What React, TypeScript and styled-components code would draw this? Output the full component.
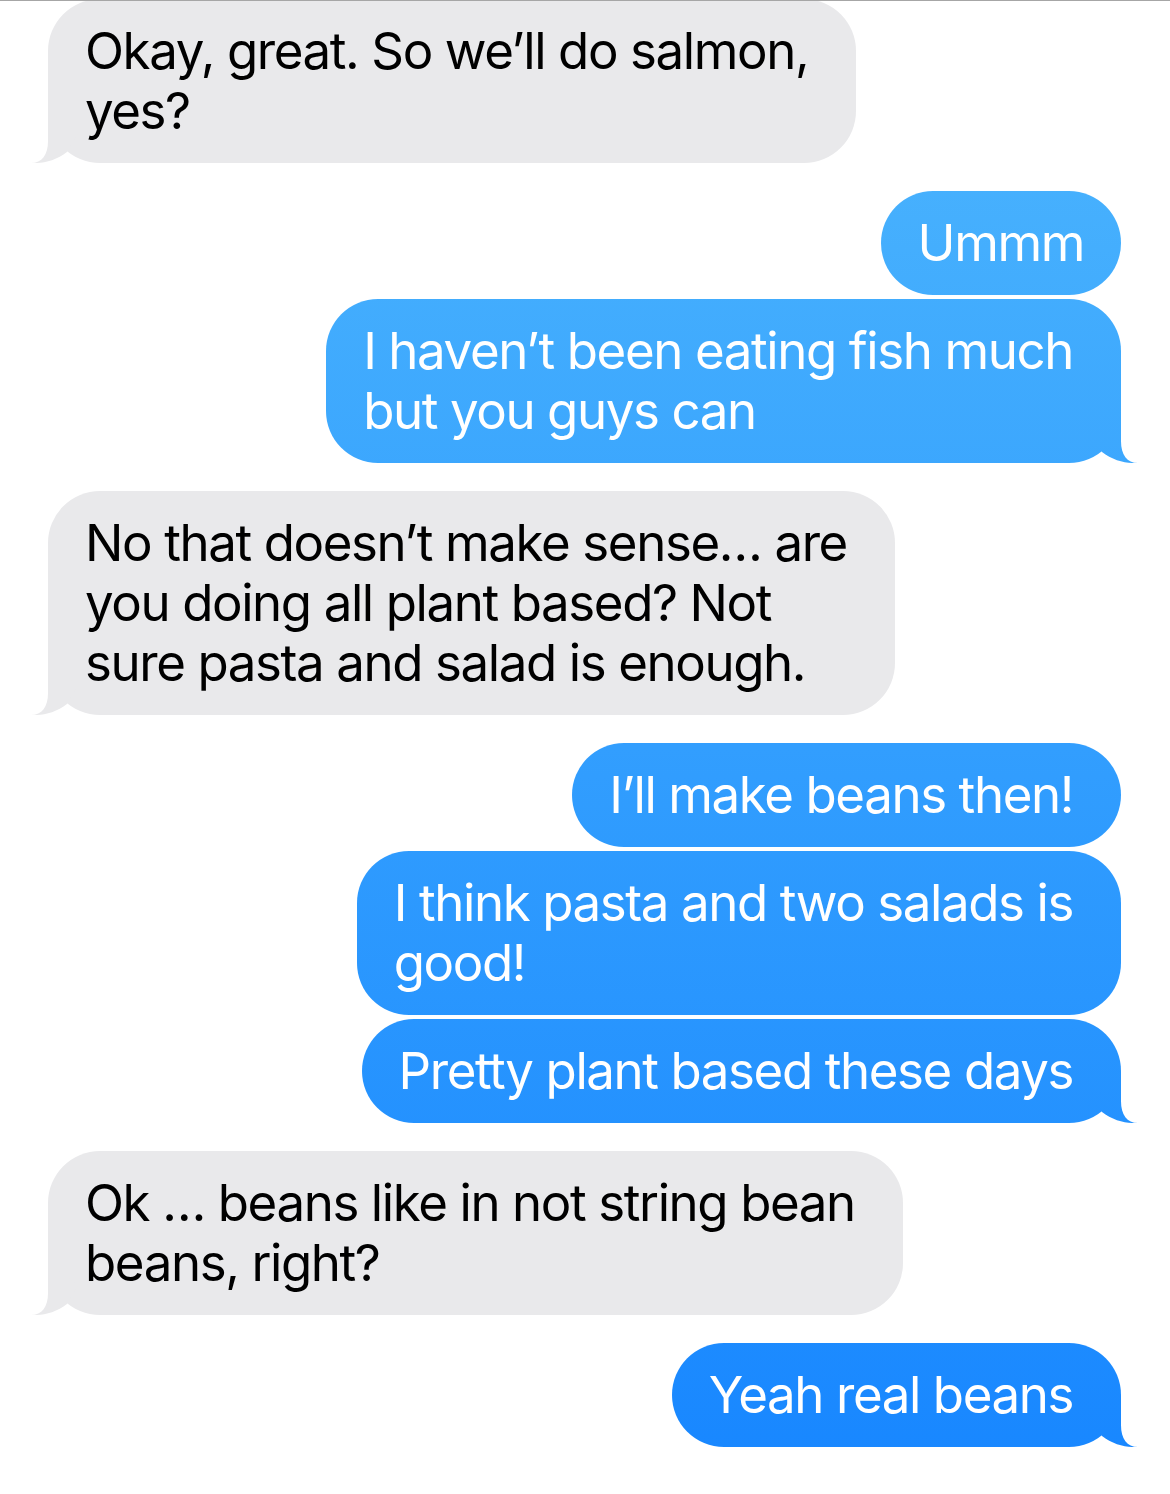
import React from "react";
import styled, { createGlobalStyle } from "styled-components";

const GlobalStyle = createGlobalStyle`
  html, body { margin: 0; padding: 0; background: #ffffff; }
  body { font-family: Inter, "Noto Sans", "Liberation Sans", sans-serif; -webkit-font-smoothing: antialiased; }
`;

const BLUE = "linear-gradient(180deg, #4db6fd 0px, #1786ff 1494px) fixed";
const GRAY = "#e9e9eb";

const Screen = styled.div`
  position: relative;
  width: 1170px;
  height: 1494px;
  overflow: hidden;
  background: #ffffff;

  &::before {
    content: "";
    position: absolute;
    top: 0;
    left: 0;
    right: 0;
    height: 1px;
    background: #a6a6a6;
    z-index: 3;
  }
`;

const Thread = styled.div`
  display: flex;
  flex-direction: column;
  margin-top: -1px;
  padding: 0 49px 0 48px;
`;

const Group = styled.div<{ $me?: boolean }>`
  display: flex;
  flex-direction: column;
  align-items: ${(p) => (p.$me ? "flex-end" : "flex-start")};
  gap: 4px;
  & + & { margin-top: 28px; }
`;

const TAIL_ME =
  "path('M 43 8 L 43 38 C 43 52, 49 60, 60 60 L 54 60 C 45 60, 33 56, 24 49 L 13 30 Z')";
const TAIL_THEM =
  "path('M 17 8 L 17 38 C 17 52, 11 60, 0 60 L 6 60 C 15 60, 27 56, 36 49 L 47 30 Z')";

const Bubble = styled.div<{ $me?: boolean; $tail?: boolean; $tight?: boolean }>`
  position: relative;
  box-sizing: border-box;
  padding: 22px ${(p) => (p.$tight ? "37px" : "48px")} 22px 37px;
  border-radius: 52px;
  background: ${(p) => (p.$me ? BLUE : GRAY)};
  color: ${(p) => (p.$me ? "#ffffff" : "#000000")};
  font-size: 51px;
  line-height: 60px;
  letter-spacing: -1.4px;
  white-space: nowrap;

  &::after {
    content: ${(p) => (p.$tail ? '""' : "none")};
    position: absolute;
    bottom: 0;
    ${(p) => (p.$me ? "right: -17px;" : "left: -17px;")}
    width: 60px;
    height: 60px;
    background: ${(p) => (p.$me ? BLUE : GRAY)};
    clip-path: ${(p) => (p.$me ? TAIL_ME : TAIL_THEM)};
  }
`;

const Line = styled.span`
  display: block;
`;

type Msg = { lines: string[]; tight?: boolean };
type G = { me: boolean; msgs: Msg[] };

const thread: G[] = [
  { me: false, msgs: [{ lines: ["Okay, great. So we\u2019ll do salmon,", "yes?"] }] },
  {
    me: true,
    msgs: [
      { lines: ["Ummm"], tight: true },
      { lines: ["I haven\u2019t been eating fish much", "but you guys can"] },
    ],
  },
  {
    me: false,
    msgs: [
      {
        lines: [
          "No that doesn\u2019t make sense\u2026 are",
          "you doing all plant based? Not",
          "sure pasta and salad is enough.",
        ],
      },
    ],
  },
  {
    me: true,
    msgs: [
      { lines: ["I\u2019ll make beans then!"] },
      { lines: ["I think pasta and two salads is", "good!"] },
      { lines: ["Pretty plant based these days"] },
    ],
  },
  { me: false, msgs: [{ lines: ["Ok \u2026 beans like in not string bean", "beans, right?"] }] },
  { me: true, msgs: [{ lines: ["Yeah real beans"] }] },
];

export default function App() {
  return (
    <>
      <GlobalStyle />
      <Screen>
        <Thread>
          {thread.map((g, gi) => (
            <Group key={gi} $me={g.me}>
              {g.msgs.map((m, mi) => (
                <Bubble
                  key={mi}
                  $me={g.me}
                  $tight={m.tight}
                  $tail={mi === g.msgs.length - 1}
                >
                  {m.lines.map((l, li) => (
                    <Line key={li}>{l}</Line>
                  ))}
                </Bubble>
              ))}
            </Group>
          ))}
        </Thread>
      </Screen>
    </>
  );
}
